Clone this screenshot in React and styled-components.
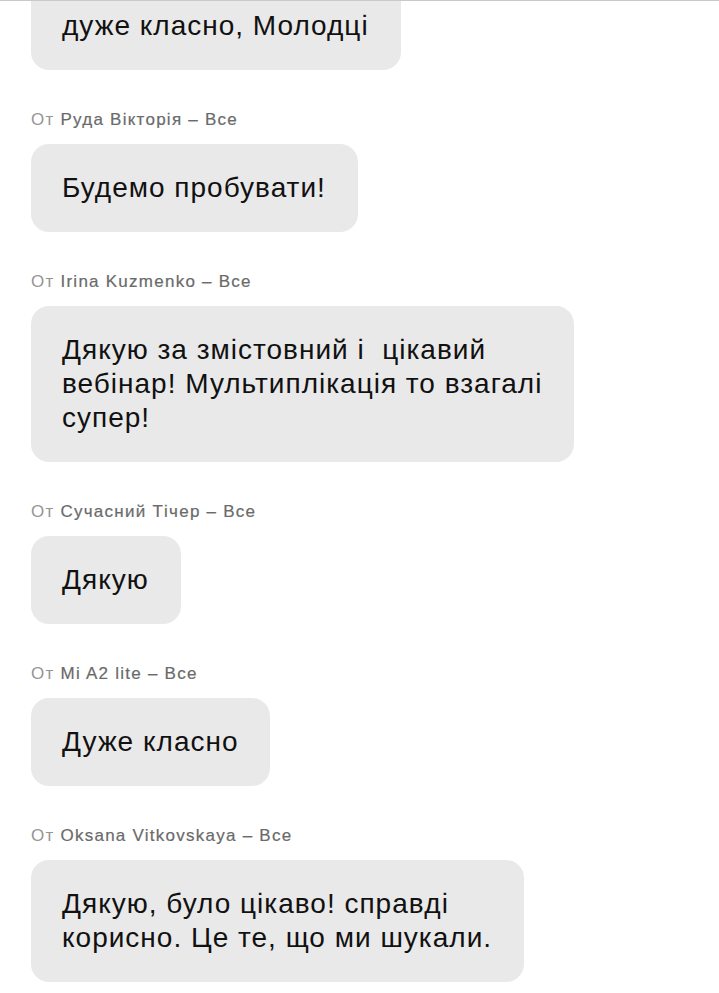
import React from "react";
import styled, { createGlobalStyle } from "styled-components";

const Global = createGlobalStyle`
  html, body { margin: 0; padding: 0; background: #ffffff; }
  body { font-family: "Liberation Sans", Arial, sans-serif; -webkit-font-smoothing: antialiased; }
`;

const Screen = styled.div`
  width: 719px;
  height: 993px;
  overflow: hidden;
  background: #ffffff;
  border-top: 1px solid #c9c9c9;
  box-sizing: border-box;
`;

const Feed = styled.div`
  display: flex;
  flex-direction: column;
  align-items: flex-start;
  padding: 0 31px;
  margin-top: -19px;
`;

const Message = styled.div`
  display: flex;
  flex-direction: column;
  align-items: flex-start;
  margin-bottom: 40px;
`;

const Meta = styled.div`
  font-size: 17px;
  line-height: 20px;
  letter-spacing: 1.25px;
  color: #6a6a6a;
  -webkit-text-stroke: 0.2px #6a6a6a;
  margin-bottom: 14px;
  white-space: nowrap;
`;

const From = styled.span`
  color: #959595;
  -webkit-text-stroke: 0;
`;

const Bubble = styled.div`
  background: #e9e9e9;
  border-radius: 18px;
  padding: 27px 32px 27px 31px;
  font-size: 28px;
  line-height: 34px;
  letter-spacing: 1px;
  color: #111111;
  white-space: pre-wrap;
`;

const messages = [
  { name: null, text: "дуже класно, Молодці" },
  { name: "Руда Вікторія", text: "Будемо пробувати!" },
  {
    name: "Irina Kuzmenko",
    text: "Дякую за змістовний і  цікавий\nвебінар! Мультиплікація то взагалі\nсупер!",
  },
  { name: "Сучасний Тічер", text: "Дякую" },
  { name: "Mi A2 lite", text: "Дуже класно" },
  {
    name: "Oksana Vitkovskaya",
    text: "Дякую, було цікаво! справді\nкорисно. Це те, що ми шукали.",
  },
];

export default function App() {
  return (
    <>
      <Global />
      <Screen>
        <Feed>
          {messages.map((m, i) => (
            <Message key={i}>
              {m.name && (
                <Meta>
                  <From>От </From>
                  {m.name} – Все
                </Meta>
              )}
              <Bubble>{m.text}</Bubble>
            </Message>
          ))}
        </Feed>
      </Screen>
    </>
  );
}
